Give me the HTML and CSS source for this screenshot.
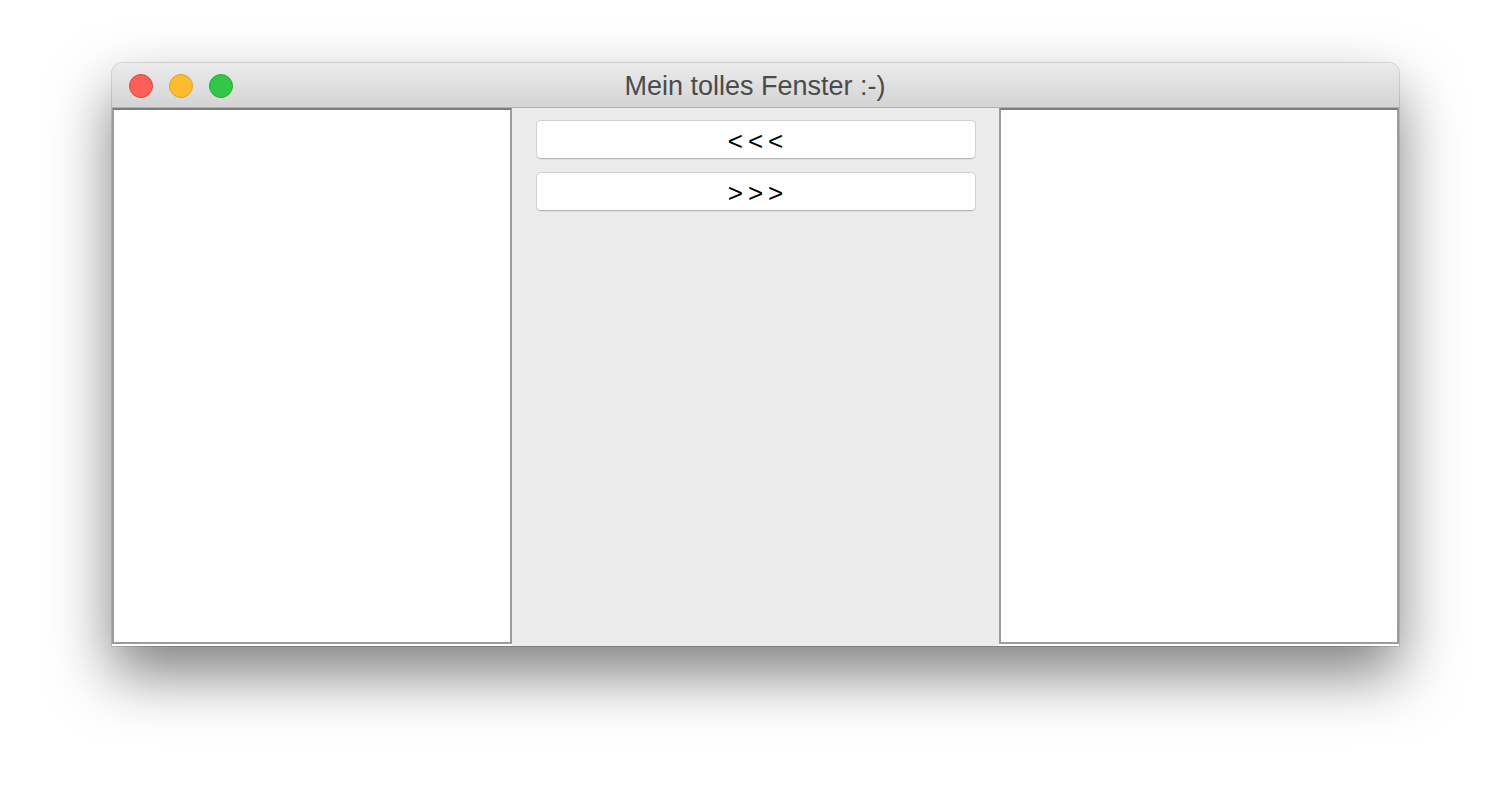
FILE: index.html
```html
<!DOCTYPE html>
<html lang="de">
<head>
<meta charset="utf-8">
<title>Mein tolles Fenster :-)</title>
<link rel="stylesheet" href="styles.css">
</head>
<body>
<div class="window">
  <div class="titlebar">
    <div class="lights">
      <span class="light red"></span>
      <span class="light yellow"></span>
      <span class="light green"></span>
    </div>
    <div class="title">Mein tolles Fenster :-)</div>
  </div>
  <div class="body">
    <div class="list-wrap"><div class="list"></div></div>
    <div class="middle">
      <button class="btn">&lt;&lt;&lt;</button>
      <button class="btn">&gt;&gt;&gt;</button>
    </div>
    <div class="list-wrap"><div class="list"></div></div>
  </div>
</div>
</body>
</html>
```

FILE: styles.css
```css
html, body {
  margin: 0;
  padding: 0;
  background: #ffffff;
}
html { height: 100%; }
body {
  min-height: 100%;
  box-sizing: border-box;
  padding-top: 63px;
  font-family: "Liberation Sans", Arial, sans-serif;
}
.window {
  width: 1287px;
  margin: 0 auto;
  border-radius: 10px 10px 0 0;
  box-shadow: 0 0 0 1px rgba(0,0,0,0.12), 0 28px 60px rgba(0,0,0,0.5);
  background: #ececec;
}
.titlebar {
  height: 44px;
  position: relative;
  display: flex;
  align-items: center;
  justify-content: center;
  background: linear-gradient(#ebebeb, #d4d4d4);
  border-bottom: 1px solid #b2b2b2;
  border-radius: 10px 10px 0 0;
}
.lights {
  position: absolute;
  left: 17px;
  top: 11px;
  display: flex;
  gap: 16px;
}
.light {
  width: 22px;
  height: 22px;
  border-radius: 50%;
  border: 1px solid rgba(0,0,0,0.12);
}
.red { background: #fc5f57; border-color: #e0443e; }
.yellow { background: #fdbc2e; border-color: #dea123; }
.green { background: #33c748; border-color: #27aa35; }
.title {
  font-size: 27px;
  color: #4b4b4b;
  padding-top: 3px;
}
.body {
  display: flex;
  height: 538px;
}
.list-wrap {
  width: 400px;
  background: #ffffff;
  padding-bottom: 2px;
  box-sizing: border-box;
}
.list {
  height: 100%;
  box-sizing: border-box;
  border: 2px solid #9c9c9c;
  border-top-color: #7d7d7d;
  background: #ffffff;
}
.middle {
  flex: 1;
  display: flex;
  flex-direction: column;
  padding: 12px 23px 0 24px;
  gap: 13px;
  background: #ececec;
}
.btn {
  height: 39px;
  background: #ffffff;
  border: 1px solid #d0d0d0;
  border-bottom-color: #b4b4b4;
  border-radius: 5px;
  font-family: "Liberation Sans", Arial, sans-serif;
  font-size: 26px;
  letter-spacing: 5px;
  text-indent: 5px;
  color: #000;
  padding: 3px 0 0 0;
  line-height: 34px;
  box-shadow: 0 1px 1px rgba(0,0,0,0.06);
}
```
